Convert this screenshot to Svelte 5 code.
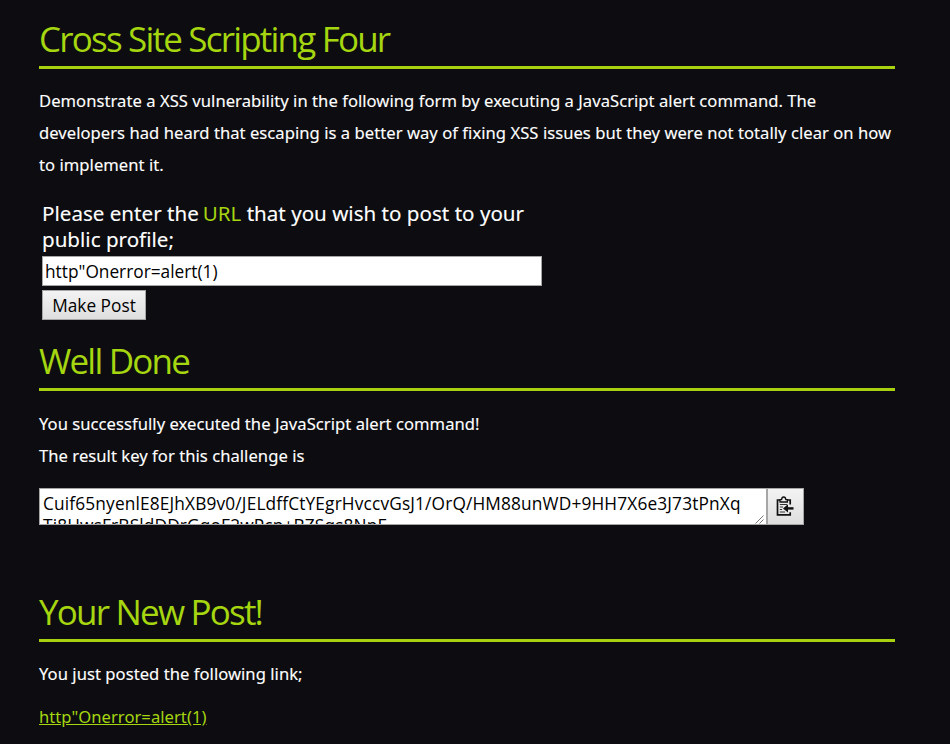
<script>
  let url = $state('http"Onerror=alert(1)');
  const keyLines = [
    'Cuif65nyenlE8EJhXB9v0/JELdffCtYEgrHvccvGsJ1/OrQ/HM88unWD+9HH7X6e3J73tPnXq',
    'Ti8HwsFrBSldDDrGqoF2wPcp+BZSqs8NpF'
  ];
</script>

<main>
  <section>
    <h2>Cross Site Scripting Four</h2>
    <p>
      Demonstrate a XSS vulnerability in the following form by executing a JavaScript alert command. The<br />
      developers had heard that escaping is a better way of fixing XSS issues but they were not totally clear on how<br />
      to implement it.
    </p>
    <form onsubmit={(e) => e.preventDefault()}>
      <label for="url">Please enter the <a href="#url">URL</a> that you wish to post to your<br />public profile;</label>
      <input id="url" type="text" bind:value={url} />
      <button type="submit">Make Post</button>
    </form>
  </section>

  <section class="result">
    <h2>Well Done</h2>
    <p>You successfully executed the JavaScript alert command!<br />The result key for this challenge is</p>
    <div class="key-row">
      <div class="key">
        {#each keyLines as line}<div>{line}</div>{/each}
        <svg class="grip" width="9" height="9" viewBox="0 0 9 9" fill="none" stroke="#777" stroke-width="1">
          <path d="M0.5 8.5L8.5 0.5M4.5 8.5L8.5 4.5" />
        </svg>
      </div>
      <button class="copy" type="button" aria-label="Copy key">
        <svg width="18" height="21" viewBox="0 0 18 21" fill="none" stroke="#111">
          <path d="M4.5 4H1.5V18.8H14.2V16.2M11 4H14.2V8.5" stroke-width="1.7" />
          <path d="M4 6V3.6H5.6Q5.8 1 7.7 1T9.8 3.6H11.4V6Z" stroke-width="1.3" fill="#eee" />
          <path d="M3.8 8.5H11M3.8 11H7M3.8 13.5H6M3.8 16H9" stroke-width="1" stroke="#333" />
          <path d="M17.5 12.4H10" stroke-width="2.4" />
          <path d="M7 12.4L12 8.2V16.6Z" fill="#111" stroke="none" />
        </svg>
      </button>
    </div>
  </section>

  <section class="post">
    <h2>Your New Post!</h2>
    <p>You just posted the following link;</p>
    <p class="link"><a href="#post">{url}</a></p>
  </section>
</main>

<style>
  :global(body) {
    background: #0d0d11;
  }
  main {
    box-sizing: border-box;
    width: 950px;
    height: 744px;
    padding: 15px 55px 0 39px;
    overflow: hidden;
    background: #0d0d11;
    color: #fff;
    font: 16.6px/32px "Noto Sans", sans-serif;
    letter-spacing: 0.04px;
  }
  h2 {
    margin: 0 0 16px;
    padding-bottom: 3px;
    border-bottom: 3px solid #a8d110;
    color: #a5d610;
    font: 400 35px/48px "Open Sans", sans-serif;
    letter-spacing: -1.8px;
  }
  p {
    margin: 0;
    white-space: nowrap;
  }
  p,
  label {
    -webkit-text-stroke: 0.12px currentColor;
  }
  a {
    color: #a5d610;
    -webkit-text-stroke: 0;
  }
  form {
    display: flex;
    flex-direction: column;
    align-items: flex-start;
    gap: 4px;
    margin: 19px 0 0 3px;
  }
  label {
    font-size: 20.55px;
    line-height: 26px;
    letter-spacing: 0.02px;
  }
  label a {
    margin-left: -1.5px;
    text-decoration: none;
  }
  input,
  button,
  .key {
    box-sizing: border-box;
    border: 1px solid #a6a6a6;
    border-radius: 0;
    background: #fff;
    color: #000;
    font: 17.3px/22px "Open Sans", sans-serif;
    letter-spacing: 0;
  }
  input {
    width: 500px;
    height: 30px;
    padding: 0 2px;
    outline: none;
  }
  button {
    width: 104px;
    height: 30px;
    padding: 2px 0 0;
    background: linear-gradient(#f3f3f3, #dedede);
    white-space: nowrap;
  }
  .result {
    margin-top: 17px;
  }
  .result p {
    padding-top: 1px;
  }
  .key-row {
    display: flex;
    margin-top: 16px;
  }
  .key {
    position: relative;
    width: 728px;
    height: 37px;
    padding: 4px 3px 0;
    overflow: hidden;
    letter-spacing: 0.15px;
    white-space: nowrap;
  }
  .grip {
    position: absolute;
    right: 2px;
    bottom: 0;
  }
  .copy {
    display: flex;
    align-items: center;
    justify-content: center;
    width: 37px;
    height: 37px;
    padding: 0 2px 0 0;
  }
  .post {
    margin-top: 63px;
  }
  .link {
    margin-top: 11px;
  }
</style>
